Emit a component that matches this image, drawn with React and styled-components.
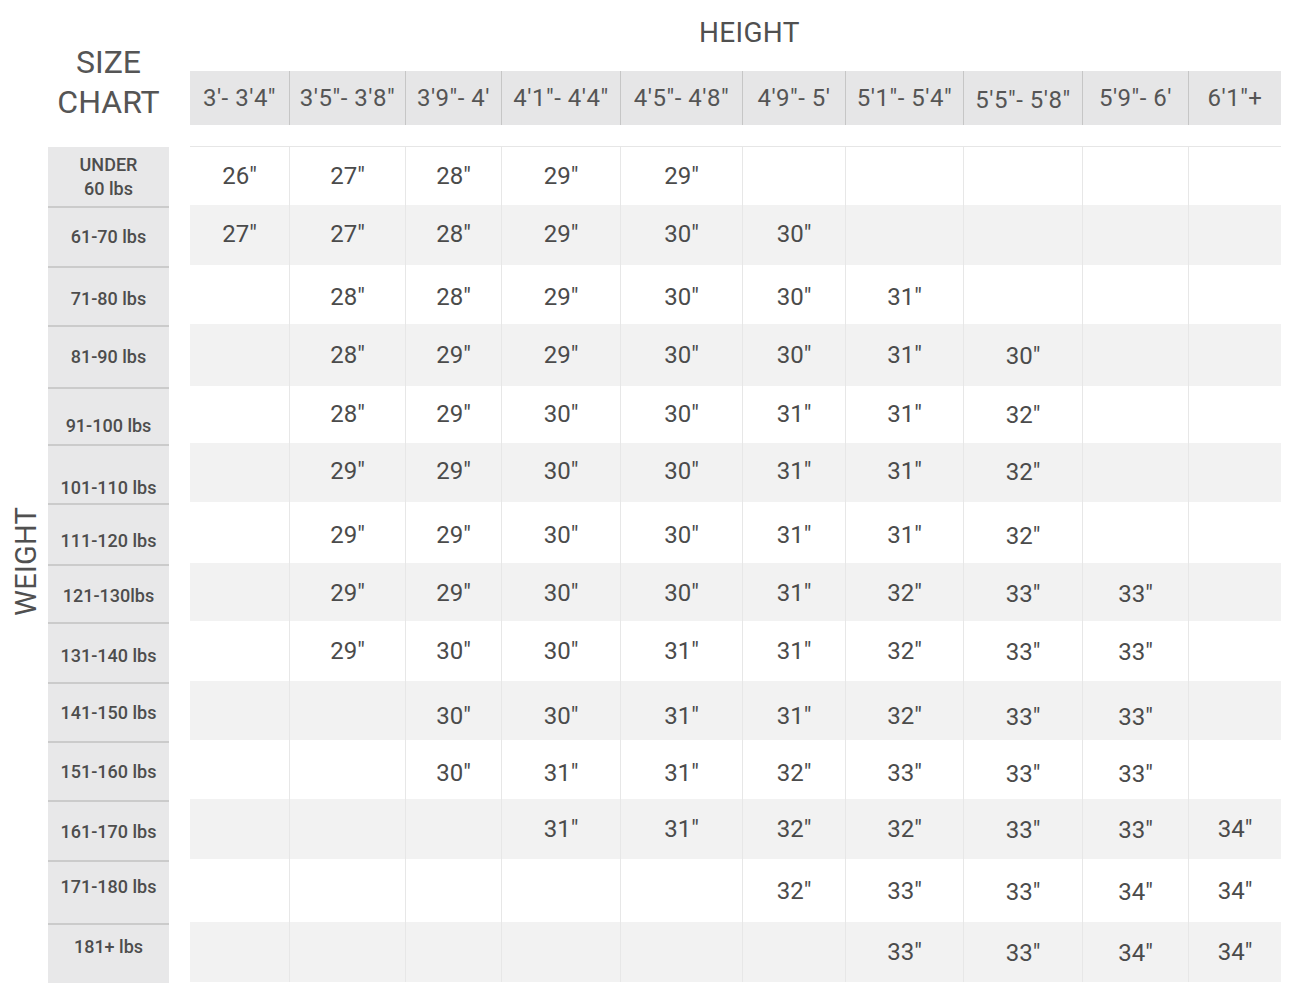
import React from "react";
import styled, { createGlobalStyle } from "styled-components";

const GlobalStyle = createGlobalStyle`
  html, body {
    margin: 0;
    padding: 0;
    background: #ffffff;
  }
  body {
    font-family: Roboto, "Liberation Sans", Arial, sans-serif;
    color: #4b4b4b;
  }
`;

const heights = [
  `3'- 3'4"`,
  `3'5"- 3'8"`,
  `3'9"- 4'`,
  `4'1"- 4'4"`,
  `4'5"- 4'8"`,
  `4'9"- 5'`,
  `5'1"- 5'4"`,
  `5'5"- 5'8"`,
  `5'9"- 6'`,
  `6'1"+`,
];

const columnWidths = [99, 116, 96, 119, 122, 103, 118, 119, 106, 93];
// the last two full columns sit a touch lower in the original artwork
const columnShift = [0, 0, 0, 0, 0, 0, 0, 1, 1, 0];

const rows = [
  { label: ["UNDER", "60 lbs"], height: 59, labelShift: 0, shift: 0, sizes: [26, 27, 28, 29, 29] },
  { label: ["61-70 lbs"], height: 60, labelShift: 0, shift: -1, sizes: [27, 27, 28, 29, 30, 30] },
  { label: ["71-80 lbs"], height: 59, labelShift: 2, shift: 2, sizes: [null, 28, 28, 29, 30, 30, 31] },
  { label: ["81-90 lbs"], height: 62, labelShift: 0, shift: 0, sizes: [null, 28, 29, 29, 30, 30, 31, 30] },
  { label: ["91-100 lbs"], height: 57, labelShift: 9, shift: -1, sizes: [null, 28, 29, 30, 30, 31, 31, 32] },
  { label: ["101-110 lbs"], height: 59, labelShift: 13, shift: -2, sizes: [null, 29, 29, 30, 30, 31, 31, 32] },
  { label: ["111-120 lbs"], height: 61, labelShift: 6, shift: 2, sizes: [null, 29, 29, 30, 30, 31, 31, 32] },
  { label: ["121-130lbs"], height: 58, labelShift: 2, shift: 1, sizes: [null, 29, 29, 30, 30, 31, 32, 33, 33] },
  { label: ["131-140 lbs"], height: 60, labelShift: 3, shift: 0, sizes: [null, 29, 30, 30, 31, 31, 32, 33, 33] },
  { label: ["141-150 lbs"], height: 59, labelShift: 0, shift: 5, sizes: [null, null, 30, 30, 31, 31, 32, 33, 33] },
  { label: ["151-160 lbs"], height: 59, labelShift: 0, shift: 3, sizes: [null, null, 30, 31, 31, 32, 33, 33, 33] },
  { label: ["161-170 lbs"], height: 60, labelShift: 1, shift: 0, sizes: [null, null, null, 31, 31, 32, 32, 33, 33, 34] },
  { label: ["171-180 lbs"], height: 63, labelShift: -6, shift: 0, sizes: [null, null, null, null, null, 32, 33, 33, 34, 34] },
  { label: ["181+ lbs"], height: 60, labelShift: -7, shift: 0, sizes: [null, null, null, null, null, null, 33, 33, 34, 34] },
];

const Page = styled.div`
  display: flex;
  flex-flow: row nowrap;
  width: 1303px;
  height: 1001px;
  overflow: hidden;
`;

const SideRail = styled.div`
  width: 48px;
  display: flex;
  flex-flow: column nowrap;
  padding-top: 147px;
  box-sizing: border-box;
`;

const WeightTitle = styled.div`
  height: 829px;
  display: flex;
  align-items: center;
  padding-left: 9px;
  span {
    writing-mode: vertical-rl;
    transform: rotate(180deg);
    font-size: 29px;
    letter-spacing: 0.2px;
    color: #505050;
    line-height: normal;
  }
`;

const LabelColumn = styled.div`
  width: 121px;
  display: flex;
  flex-flow: column nowrap;
`;

const ChartTitle = styled.div`
  height: 147px;
  box-sizing: border-box;
  padding-top: 42px;
  font-size: 32px;
  line-height: 40px;
  text-align: center;
  color: #555555;
`;

const WeightCell = styled.div`
  height: ${(p) => p.$height}px;
  box-sizing: border-box;
  background: #e8e8e9;
  border-top: ${(p) => (p.$first ? "0" : "2px solid #cbcbcb")};
  padding-top: ${(p) => Math.max(0, p.$shift * 2)}px;
  padding-bottom: ${(p) => Math.max(0, -p.$shift * 2)}px;
  display: flex;
  flex-flow: column nowrap;
  align-items: center;
  justify-content: center;
  font-size: 18px;
  font-weight: 500;
  line-height: 24px;
  color: #4d4d4d;
`;

const Main = styled.div`
  width: 1091px;
  margin-left: 21px;
  display: flex;
  flex-flow: column nowrap;
`;

const HeightTitle = styled.div`
  height: 71px;
  box-sizing: border-box;
  padding-top: 16px;
  padding-left: 509px;
  font-size: 28px;
  letter-spacing: 0.3px;
  color: #505050;
  line-height: normal;
`;

const HeaderRow = styled.div`
  display: flex;
  height: 54px;
  background: #e6e6e7;
`;

const HeaderCell = styled.div`
  width: ${(p) => p.$width}px;
  box-sizing: border-box;
  border-left: ${(p) => (p.$first ? "0" : "1px solid #c6c6c6")};
  display: flex;
  align-items: center;
  justify-content: center;
  font-size: 24px;
  letter-spacing: 0.5px;
  color: #555555;
  white-space: nowrap;
  padding-top: ${(p) => (p.$low ? 4 : 0)}px;
`;

const HeaderGap = styled.div`
  height: 21px;
  border-bottom: 1px solid #e6e6e6;
`;

const BodyRow = styled.div`
  display: flex;
  height: ${(p) => p.$height - (p.$first ? 1 : 0)}px;
  background: ${(p) => (p.$striped ? "#f2f2f2" : "#ffffff")};
`;

const ValueCell = styled.div`
  width: ${(p) => p.$width}px;
  box-sizing: border-box;
  border-left: ${(p) => (p.$first ? "0" : "1px solid #e7e7e7")};
  padding-top: ${(p) => Math.max(0, p.$shift * 2)}px;
  padding-bottom: ${(p) => Math.max(0, -p.$shift * 2)}px;
  display: flex;
  align-items: center;
  justify-content: center;
  font-size: 24px;
  color: #4b4b4b;
`;

export default function App() {
  return (
    <>
      <GlobalStyle />
      <Page>
        <SideRail>
          <WeightTitle>
            <span>WEIGHT</span>
          </WeightTitle>
        </SideRail>

        <LabelColumn>
          <ChartTitle>
            SIZE
            <br />
            CHART
          </ChartTitle>
          {rows.map((row, i) => (
            <WeightCell
              key={i}
              $height={row.height}
              $shift={row.labelShift}
              $first={i === 0}
            >
              {row.label.map((line) => (
                <span key={line}>{line}</span>
              ))}
            </WeightCell>
          ))}
        </LabelColumn>

        <Main>
          <HeightTitle>HEIGHT</HeightTitle>
          <HeaderRow>
            {heights.map((h, i) => (
              <HeaderCell
                key={h}
                $width={columnWidths[i]}
                $first={i === 0}
                $low={i === 7}
              >
                {h}
              </HeaderCell>
            ))}
          </HeaderRow>
          <HeaderGap />
          {rows.map((row, r) => (
            <BodyRow
              key={r}
              $height={row.height}
              $striped={r % 2 === 1}
              $first={r === 0}
            >
              {columnWidths.map((w, c) => {
                const value = row.sizes[c];
                return (
                  <ValueCell
                    key={c}
                    $width={w}
                    $first={c === 0}
                    $shift={row.shift + (value ? columnShift[c] : 0)}
                  >
                    {value ? `${value}"` : ""}
                  </ValueCell>
                );
              })}
            </BodyRow>
          ))}
        </Main>
      </Page>
    </>
  );
}
